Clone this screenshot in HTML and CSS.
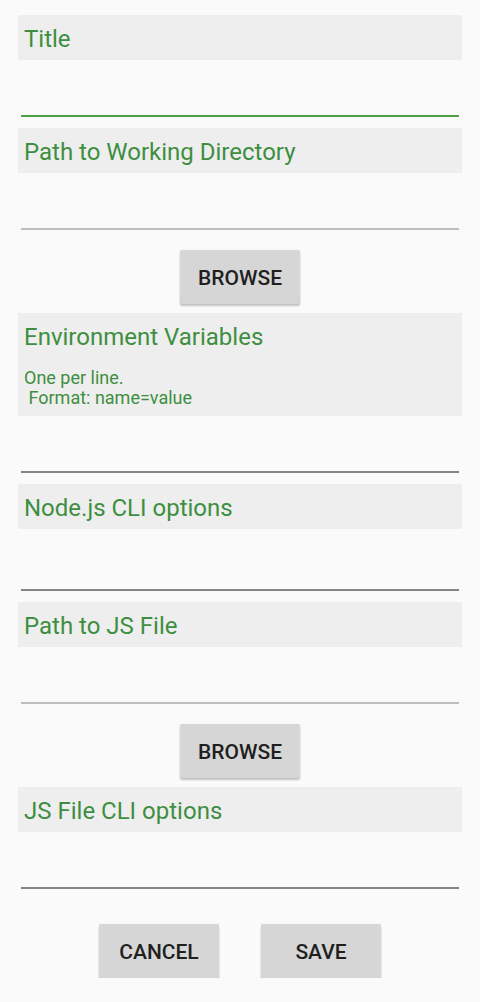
FILE: index.html
```html
<!DOCTYPE html>
<html>
<head>
<meta charset="utf-8">
<link rel="stylesheet" href="styles.css">
</head>
<body>
<div class="form">
  <div class="field">
    <div class="label">Title</div>
    <div class="input input-focused"></div>
  </div>
  <div class="field">
    <div class="label">Path to Working Directory</div>
    <div class="input input-light"></div>
  </div>
  <div class="btn-row"><button class="btn">Browse</button></div>
  <div class="field">
    <div class="label label-multi">
      <div class="label-title">Environment Variables</div>
      <div class="hint">One per line.
 Format: name=value</div>
    </div>
    <div class="input input-dark"></div>
  </div>
  <div class="field">
    <div class="label">Node.js CLI options</div>
    <div class="input input-dark input-tall"></div>
  </div>
  <div class="field">
    <div class="label">Path to JS File</div>
    <div class="input input-light"></div>
  </div>
  <div class="btn-row"><button class="btn">Browse</button></div>
  <div class="field">
    <div class="label">JS File CLI options</div>
    <div class="input input-dark"></div>
  </div>
  <div class="actions">
    <button class="btn">Cancel</button>
    <button class="btn">Save</button>
  </div>
</div>
</body>
</html>
```
FILE: styles.css
```css
html, body {
  margin: 0;
  padding: 0;
  background: #fafafa;
  font-family: Roboto, "Noto Sans", sans-serif;
}

.form {
  padding: 15px 18px 0;
  display: flex;
  flex-direction: column;
}

.field {
  display: flex;
  flex-direction: column;
  margin-bottom: 11px;
}

.label {
  background: #eeeeee;
  color: #3e8e41;
  font-size: 24px;
  height: 45px;
  line-height: 49px;
  padding-left: 6px;
  overflow: hidden;
}

.label-multi {
  height: auto;
  line-height: normal;
}

.label-title {
  height: 45px;
  line-height: 49px;
}

.hint {
  white-space: pre;
  font-size: 18px;
  line-height: 20px;
  margin-top: 10px;
  padding-bottom: 8px;
}

.input {
  height: 55px;
  margin: 0 3px;
  border-bottom: 2px solid #bdbdbd;
}

.input-focused {
  border-bottom-color: #4f9f46;
}

.input-light {
  border-bottom-color: #bdbdbd;
}

.input-dark {
  border-bottom-color: #858585;
}

.input-tall {
  height: 60px;
}

.btn-row {
  display: flex;
  justify-content: center;
  padding: 9px 0;
}

.btn {
  width: 120px;
  height: 54px;
  border: none;
  border-radius: 2px;
  background: #d6d6d6;
  color: #1f1f1f;
  font-family: Roboto, "Noto Sans", sans-serif;
  font-weight: 500;
  font-size: 21px;
  line-height: 56px;
  text-transform: uppercase;
  box-shadow: 0 2px 2px rgba(0, 0, 0, 0.22), 0 0 1px rgba(0, 0, 0, 0.12);
  padding: 0;
}

.actions {
  display: flex;
  justify-content: center;
  gap: 42px;
  padding-top: 24px;
}
```
